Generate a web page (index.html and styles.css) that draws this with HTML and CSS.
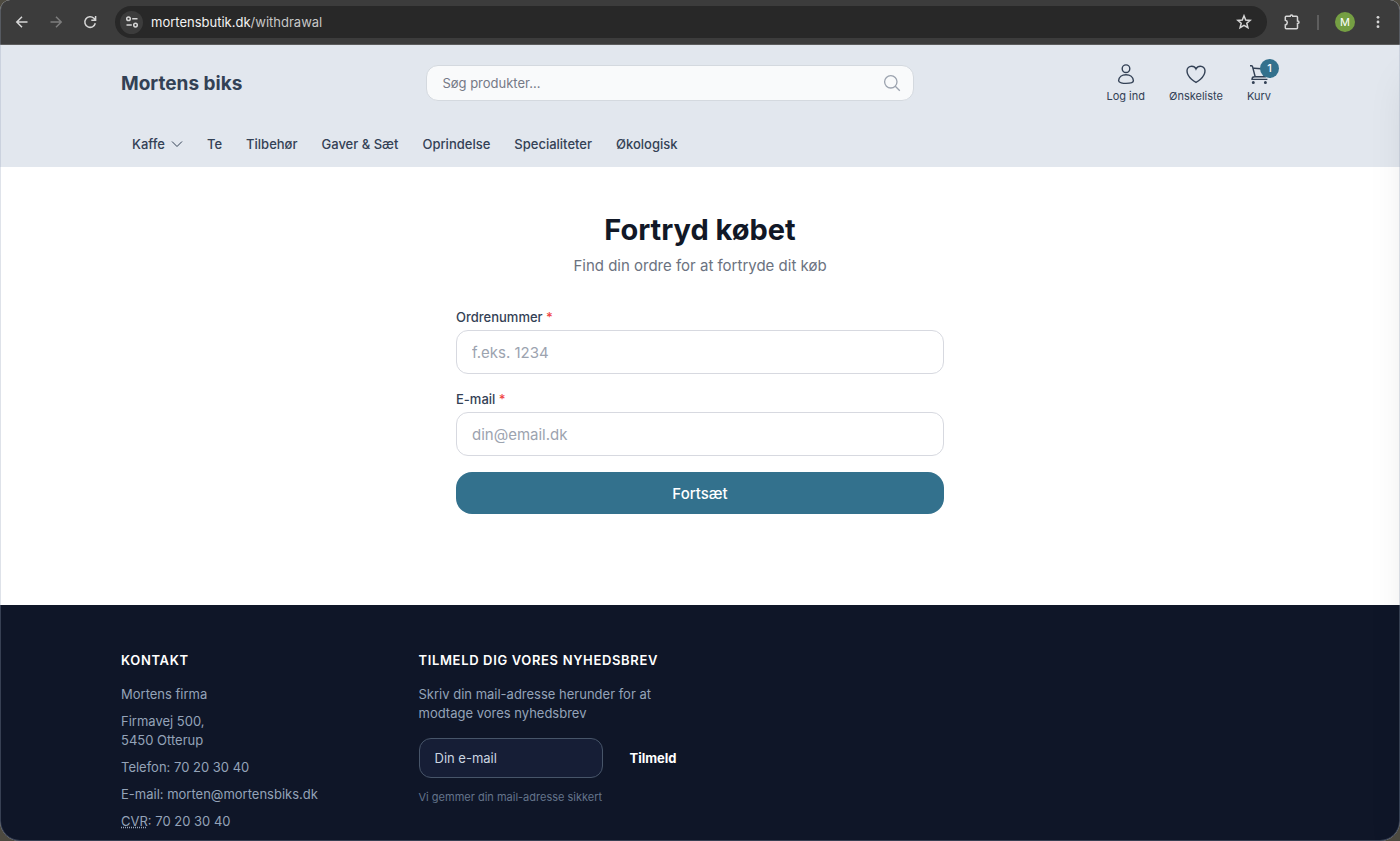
FILE: index.html
```html
<!DOCTYPE html>
<html lang="da">
<head>
<meta charset="utf-8">
<meta name="viewport" content="width=device-width, initial-scale=1">
<title>Fortryd købet – Mortens biks</title>
<link rel="stylesheet" href="styles.css">
</head>
<body>
<div class="window">
  <div class="toolbar">
    <div class="toolbar-nav">
      <button class="tool" aria-label="Tilbage"><svg width="14" height="14" viewBox="0 0 14 14"><path d="M12.5 7H2M7 1.800 1.800 7 7 12.200"/></svg></button>
      <button class="tool tool-off" aria-label="Frem"><svg width="14" height="14" viewBox="0 0 14 14"><path d="M1.500 7H12M7 1.800 12.200 7 7 12.200"/></svg></button>
      <button class="tool" aria-label="Genindlæs"><svg width="14" height="14" viewBox="0 0 14 14"><path d="M12.300 8.300A5.300 5.300 0 1 1 10.900 3.300L12.400 4.900M12.600 1v4.200H8.300"/></svg></button>
    </div>
    <div class="address">
      <button class="site-info" aria-label="Webstedsoplysninger"><svg width="14" height="14" viewBox="0 0 14 14"><circle cx="3.500" cy="3.700" r="1.800"/><path d="M7.200 3.700H12.500M1.500 10.100H6.800"/><circle cx="10.500" cy="10.100" r="1.800"/></svg></button>
      <span class="url">mortensbutik.dk<span class="url-path">/withdrawal</span></span>
      <button class="tool" aria-label="Bogmærk"><svg width="16" height="16" viewBox="0 0 16 16"><path d="M8 1.800 9.700 6l4.500.4-3.400 2.900 1.100 4.400L8 11.300l-3.900 2.400 1.100-4.400L1.800 6.400 6.300 6z"/></svg></button>
    </div>
    <div class="toolbar-end">
      <button class="tool" aria-label="Udvidelser"><svg width="18" height="18" viewBox="0 0 18 18"><path d="M2.300 4.300Q2.300 3.300 3.300 3.300H7.200Q7.200 2 8.500 2T9.800 3.300H13.500Q14.500 3.300 14.500 4.300V8Q16 8 16 9.300T14.500 10.600V14.800Q14.500 15.800 13.500 15.800H3.300Q2.300 15.800 2.300 14.800V11.900Q4.300 11.400 4.300 9.500T2.300 7.200Z"/></svg></button>
      <span class="divider"></span>
      <button class="avatar" aria-label="Profil M">M</button>
      <button class="tool" aria-label="Menu"><svg class="dots" width="14" height="14" viewBox="0 0 14 14"><circle cx="7" cy="2.300" r="1.400"/><circle cx="7" cy="7" r="1.400"/><circle cx="7" cy="11.700" r="1.400"/></svg></button>
    </div>
  </div>

  <header class="header">
    <div class="container">
      <div class="header-top">
        <a class="brand" href="#">Mortens biks</a>
        <form class="search" role="search">
          <input type="search" aria-label="Søg produkter" placeholder="Søg produkter...">
          <button aria-label="Søg"><svg width="18" height="18" viewBox="0 0 18 18"><circle cx="7.800" cy="7.800" r="6.200"/><path d="m12.300 12.300 4.500 4.500"/></svg></button>
        </form>
        <div class="actions">
          <a class="action" href="#"><svg width="24" height="22" viewBox="0 0 24 22"><circle cx="12" cy="5.700" r="3.800"/><path d="M4.600 17.800C4.800 14 8 11.700 12 11.700s7.200 2.300 7.400 6.100C19.400 19.700 15 20.400 12 20.400S4.600 19.700 4.600 17.800Z"/></svg>Log ind</a>
          <a class="action" href="#"><svg width="24" height="22" viewBox="0 0 24 22"><path d="M21 7.800C21 5.300 18.900 3.300 16.400 3.300c-1.900 0-3.600 1.100-4.400 2.700-.700-1.600-2.400-2.700-4.300-2.700C5.100 3.300 3 5.300 3 7.800c0 7 9 11.600 9 11.600s9-4.600 9-11.600Z"/></svg>Ønskeliste</a>
          <a class="action" href="#"><span class="cart"><svg width="24" height="22" viewBox="0 0 24 22"><path d="M3 2.700H4.300C4.900 2.700 5.300 3 5.500 3.500L8.200 13.700M6 5.300C11 5.200 16 5.700 20.600 6.900 20 9.200 19.200 11.500 18.300 13.700H7.600C6.200 13.700 5 14.900 5 16.400H20.400"/><circle cx="6.300" cy="19.500" r=".8"/><circle cx="18.400" cy="19.500" r=".8"/></svg><span class="badge">1</span></span>Kurv</a>
        </div>
      </div>
      <nav class="nav">
        <a href="#">Kaffe<svg width="12" height="12" viewBox="0 0 12 12"><path d="m1 3.500 5 5 5-5"/></svg></a>
        <a href="#">Te</a>
        <a href="#">Tilbehør</a>
        <a href="#">Gaver &amp; Sæt</a>
        <a href="#">Oprindelse</a>
        <a href="#">Specialiteter</a>
        <a href="#">Økologisk</a>
      </nav>
    </div>
  </header>

  <main class="main">
    <h1>Fortryd købet</h1>
    <p class="lead">Find din ordre for at fortryde dit køb</p>
    <form class="form">
      <div class="field">
        <label for="order">Ordrenummer <span class="required">*</span></label>
        <input id="order" type="text" placeholder="f.eks. 1234">
      </div>
      <div class="field">
        <label for="email">E-mail <span class="required">*</span></label>
        <input id="email" type="email" placeholder="din@email.dk">
      </div>
      <button class="submit">Fortsæt</button>
    </form>
  </main>

  <footer class="footer">
    <div class="container footer-grid">
      <section>
        <h2>Kontakt</h2>
        <address class="contact">
          <p>Mortens firma</p>
          <p>Firmavej 500,<br>5450 Otterup</p>
          <p>Telefon: 70 20 30 40</p>
          <p>E-mail: morten@mortensbiks.dk</p>
          <p><abbr title="Centrale Virksomhedsregister">CVR</abbr>: 70 20 30 40</p>
        </address>
      </section>
      <section>
        <h2>Tilmeld dig vores nyhedsbrev</h2>
        <p>Skriv din mail-adresse herunder for at modtage vores nyhedsbrev</p>
        <form class="signup">
          <input type="email" aria-label="Din e-mail" placeholder="Din e-mail">
          <button>Tilmeld</button>
        </form>
        <small>Vi gemmer din mail-adresse sikkert</small>
      </section>
    </div>
  </footer>
  <aside class="drawer" aria-hidden="true"></aside>
</div>
</body>
</html>
```
FILE: styles.css
```css
* {
  box-sizing: border-box;
}

body {
  margin: 0;
  background: #4d4a40;
  color: #334155;
  font: 13px/19px Inter, "Liberation Sans", sans-serif;
}

h1, h2, p {
  margin: 0;
}

a {
  color: inherit;
  text-decoration: none;
}

button, input {
  margin: 0;
  font: inherit;
}

button {
  padding: 0;
  border: 0;
  background: none;
  color: inherit;
}

svg {
  display: block;
  flex: none;
  fill: none;
  stroke: currentColor;
}

.window {
  position: relative;
  display: flex;
  flex-direction: column;
  min-height: 100vh;
  overflow: hidden;
  border-radius: 10px 10px 20px 20px;
  background: #fff;
}

.window::after {
  content: "";
  position: absolute;
  inset: 0;
  border: solid #94a3b84d;
  border-width: 0 1px 1px;
  border-radius: inherit;
  pointer-events: none;
}

/* Browser toolbar */
.toolbar {
  display: flex;
  align-items: center;
  gap: 14px;
  height: 45px;
  padding: 0 15px;
  border-bottom: 1px solid #5c5c5c;
  background: #3c3c3c;
  color: #d6d6d6;
}

.toolbar-nav {
  display: flex;
  gap: 20px;
  padding-right: 4px;
}

.tool {
  display: grid;
  place-items: center;
  stroke-width: 1.500;
}

.tool-off {
  color: #7d7d7d;
}

.address {
  display: flex;
  flex: 1;
  align-items: center;
  gap: 8px;
  height: 32px;
  padding: 0 15px 0 5px;
  border-radius: 16px;
  background: #282828;
}

.site-info {
  display: grid;
  place-items: center;
  width: 23px;
  height: 23px;
  border-radius: 50%;
  background: #3c3c3c;
  stroke-width: 1.500;
}

.url {
  flex: 1;
  color: #f3f3f3;
}

.url-path {
  color: #c7c7c7;
}

.toolbar-end {
  display: flex;
  align-items: center;
  gap: 16px;
  padding-left: 2px;
}

.divider {
  width: 2px;
  height: 15px;
  background: #5e5e5e;
}

.avatar {
  width: 20px;
  height: 20px;
  border-radius: 50%;
  background: #759f43;
  color: #fff;
  font-size: 11px;
}

.dots {
  fill: currentColor;
  stroke: none;
}

/* Shop header */
.container {
  width: 100%;
  max-width: 1158px;
  margin: 0 auto;
}

.header {
  background: #e2e7ee;
}

.header-top {
  display: flex;
  align-items: center;
  justify-content: space-between;
  height: 76px;
}

.brand {
  font-size: 19px;
  font-weight: 700;
}

.search {
  display: flex;
  align-items: center;
  width: 488px;
  height: 36px;
  padding: 0 12px 0 15px;
  border: 1px solid #d4d9df;
  border-radius: 12px;
  background: #f9fafb;
  color: #9ca3af;
  stroke-width: 1.300;
}

.search input {
  flex: 1;
  min-width: 0;
  padding: 0;
  border: 0;
  outline: 0;
  background: none;
}

.search input::placeholder {
  color: #757986;
  opacity: 1;
}

.actions {
  display: flex;
  gap: 24px;
  padding: 1px 8px 0;
}

.action {
  display: flex;
  flex-direction: column;
  align-items: center;
  gap: 2px;
  font-size: 11px;
  line-height: 18px;
  stroke-width: 1.400;
}

.cart {
  position: relative;
}

.badge {
  position: absolute;
  top: -4px;
  right: -8px;
  width: 19px;
  height: 19px;
  border-radius: 50%;
  background: #33718d;
  color: #fff;
  font-size: 11px;
  font-weight: 500;
  line-height: 19px;
  text-align: center;
}

.nav {
  display: flex;
  gap: 24px;
  height: 46px;
  padding: 0 11px;
  font-weight: 500;
  line-height: 46px;
}

.nav a {
  display: flex;
  align-items: center;
  gap: 6px;
}

/* Withdrawal form */
.main {
  width: 488px;
  max-width: 100%;
  margin: 0 auto;
  padding: 46px 0 91px;
}

.main h1 {
  color: #111827;
  font-size: 29px;
  font-weight: 700;
  line-height: 34px;
  text-align: center;
}

.lead {
  margin-top: 7px;
  color: #6b7280;
  font-size: 15px;
  line-height: 23px;
  text-align: center;
}

.form {
  display: grid;
  gap: 16px;
  margin-top: 31px;
}

.field {
  display: grid;
  gap: 4px;
}

.field label {
  font-weight: 500;
  line-height: 18px;
}

.required {
  color: #ef4444;
}

.field input {
  width: 100%;
  height: 44px;
  padding: 0 15px;
  border: 1px solid #d7d9e0;
  border-radius: 12px;
  background: #fff;
  font-size: 15px;
}

.field input::placeholder {
  color: #9ca3af;
  opacity: 1;
}

.submit {
  height: 42px;
  border-radius: 16px;
  background: #33718d;
  color: #fff;
  font-size: 15px;
  font-weight: 500;
}

/* Footer */
.footer {
  flex: 1;
  padding: 46px 0 8px;
  background: #0f1628;
  color: #94a3b8;
}

.footer-grid {
  display: grid;
  grid-template-columns: repeat(4, minmax(0, 1fr));
  gap: 32px;
}

.footer h2 {
  margin-bottom: 15px;
  color: #fff;
  font-size: 13px;
  font-weight: 600;
  letter-spacing: 0.05em;
  text-transform: uppercase;
}

.contact {
  display: grid;
  gap: 8px;
  font-style: normal;
}

.signup {
  display: flex;
  gap: 8px;
  margin: 15px 0 9px;
}

.signup input {
  flex: none;
  width: 184px;
  height: 40px;
  padding: 0 15px;
  border: 1px solid #475569;
  border-radius: 12px;
  background: #161e36;
  color: #fff;
}

.signup input::placeholder {
  color: #cbd5e1;
  opacity: 1;
}

.signup button {
  padding: 0 19px;
  color: #fff;
  font-weight: 700;
}

.footer small {
  color: #64748b;
  font-size: 11px;
}

/* Closed cart drawer, parked past the right edge */
.drawer {
  position: absolute;
  top: 45px;
  bottom: 0;
  left: 100%;
  width: 400px;
  box-shadow: 0 25px 40px -12px #00000020;
}
```
